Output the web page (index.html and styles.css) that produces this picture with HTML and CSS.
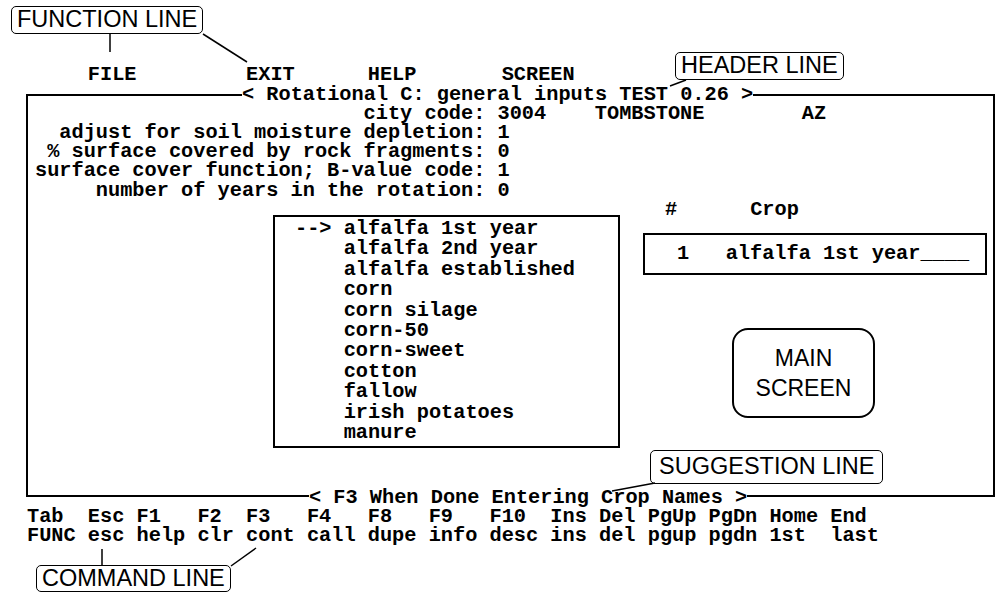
FILE: index.html
```html
<!doctype html>
<html lang="en">

<head>
  <meta charset="utf-8">
  <title>Rotational C: general inputs</title>
  <link rel="stylesheet" href="styles.css">
</head>

<body>
  <div class="figure">
    <div class="screen">
      <div class="menu">     FILE         EXIT      HELP       SCREEN</div>

      <div class="frame">
        <div class="edge edge_top">
          <span class="rule rule_left rule_header"></span>
          <span class="edge__title">&lt; Rotational C: general inputs TEST 0.26 &gt;</span>
          <span class="rule rule_right"></span>
        </div>

        <div class="frame__body">
          <div class="fields">                           city code: 3004    TOMBSTONE        AZ
  adjust for soil moisture depletion: 1
 % surface covered by rock fragments: 0
surface cover function; B-value code: 1
     number of years in the rotation: 0</div>

          <div class="lower">
            <div class="pick-list">--> alfalfa 1st year
    alfalfa 2nd year
    alfalfa established
    corn
    corn silage
    corn-50
    corn-sweet
    cotton
    fallow
    irish potatoes
    manure</div>

            <div class="crops">
              <div class="crops__head">#      Crop</div>
              <div class="crops__entry">1   alfalfa 1st year____</div>
              <div class="main-button">
                <span>MAIN</span>
                <span>SCREEN</span>
              </div>
            </div>
          </div>
        </div>

        <div class="edge edge_bottom">
          <span class="rule rule_left rule_suggest"></span>
          <span class="edge__title">&lt; F3 When Done Entering Crop Names &gt;</span>
          <span class="rule rule_right"></span>
        </div>
      </div>

      <div class="keys">Tab  Esc F1   F2  F3   F4   F8   F9   F10  Ins Del PgUp PgDn Home End
FUNC esc help clr cont call dupe info desc ins del pgup pgdn 1st  last</div>
    </div>

    <!-- annotation labels -->
    <div class="callout callout_function">FUNCTION LINE</div>
    <div class="callout callout_header">HEADER LINE</div>
    <div class="callout callout_suggestion">SUGGESTION LINE</div>
    <div class="callout callout_command">COMMAND LINE</div>

    <svg class="leaders" width="1001" height="593" viewBox="0 0 1001 593">
      <line x1="110" y1="34" x2="110" y2="52" />
      <line x1="203" y1="34" x2="247" y2="62" />
      <line x1="686" y1="80" x2="670" y2="86" />
      <line x1="655" y1="483" x2="612" y2="491" />
      <line x1="102" y1="549" x2="102" y2="566" />
      <line x1="231" y1="566" x2="256" y2="548" />
    </svg>
  </div>
</body>

</html>
```

FILE: styles.css
```css
body {
  margin: 0;
  background-color: #fff;
  color: #000;
}

*,
*::before,
*::after {
  box-sizing: border-box;
}

.figure {
  position: relative;
  width: 1001px;
  height: 593px;
  overflow: hidden;
}

.screen {
  padding-top: 65.4px;
  font-family: "Liberation Mono", "Courier New", monospace;
  font-weight: 700;
  font-size: 20.3px;
  line-height: 19.2px;
}

.menu,
.fields,
.pick-list,
.crops__head,
.crops__entry,
.keys,
.edge__title {
  white-space: pre;
}

.menu,
.keys {
  padding-left: 27px;
}

.frame {
  margin-left: 26px;
  width: 969px;
}

.edge {
  display: flex;
  height: 19.2px;
}

.rule {
  height: 50%;
  border: 0 solid #000;
}

.edge_top .rule {
  align-self: flex-end;
  border-top-width: 2px;
}

.edge_bottom .rule {
  align-self: flex-start;
  border-bottom-width: 2px;
}

.rule_left {
  border-left-width: 2px;
}

.rule_right {
  flex: 1;
  border-right-width: 2px;
}

.rule_header {
  width: 216px;
}

.rule_suggest {
  width: 283px;
}

.frame__body {
  height: 384px;
  padding-left: 7px;
  border-left: 2px solid #000;
  border-right: 2px solid #000;
}

.lower {
  display: flex;
  align-items: flex-start;
}

.pick-list {
  margin-top: 15.2px;
  margin-left: 238px;
  width: 347px;
  height: 233px;
  padding: 2px 0 0 20px;
  line-height: 20.4px;
  border: 2px solid #000;
}

.crops {
  margin-left: 23px;
  width: 344px;
}

.crops__head {
  padding-left: 22px;
}

.crops__entry {
  margin-top: 14px;
  height: 42px;
  padding: 9.4px 0 0 32px;
  border: 2px solid #000;
}

.main-button {
  display: flex;
  flex-direction: column;
  align-items: center;
  justify-content: center;
  margin-top: 53px;
  margin-left: 89px;
  width: 143px;
  height: 90px;
  font-family: "Liberation Sans", Arial, sans-serif;
  font-weight: 400;
  font-size: 23px;
  line-height: 30px;
  border: 2px solid #000;
  border-radius: 16px;
}

.callout {
  position: absolute;
  padding: 0 5px;
  font-family: "Liberation Sans", Arial, sans-serif;
  font-size: 23.5px;
  white-space: nowrap;
  background-color: #fff;
  border: 1.5px solid #000;
  border-radius: 5px;
}

.callout_function {
  left: 11px;
  top: 6px;
  height: 28px;
  line-height: 25px;
}

.callout_header {
  left: 675px;
  top: 52px;
  height: 28px;
  line-height: 25px;
}

.callout_suggestion {
  left: 650px;
  top: 450px;
  height: 34px;
  padding: 0 8px;
  line-height: 31px;
}

.callout_command {
  left: 36px;
  top: 565px;
  height: 27px;
  line-height: 24px;
}

.leaders {
  position: absolute;
  top: 0;
  left: 0;
  pointer-events: none;
}

.leaders line {
  stroke: #000;
  stroke-width: 1.5;
}
```
